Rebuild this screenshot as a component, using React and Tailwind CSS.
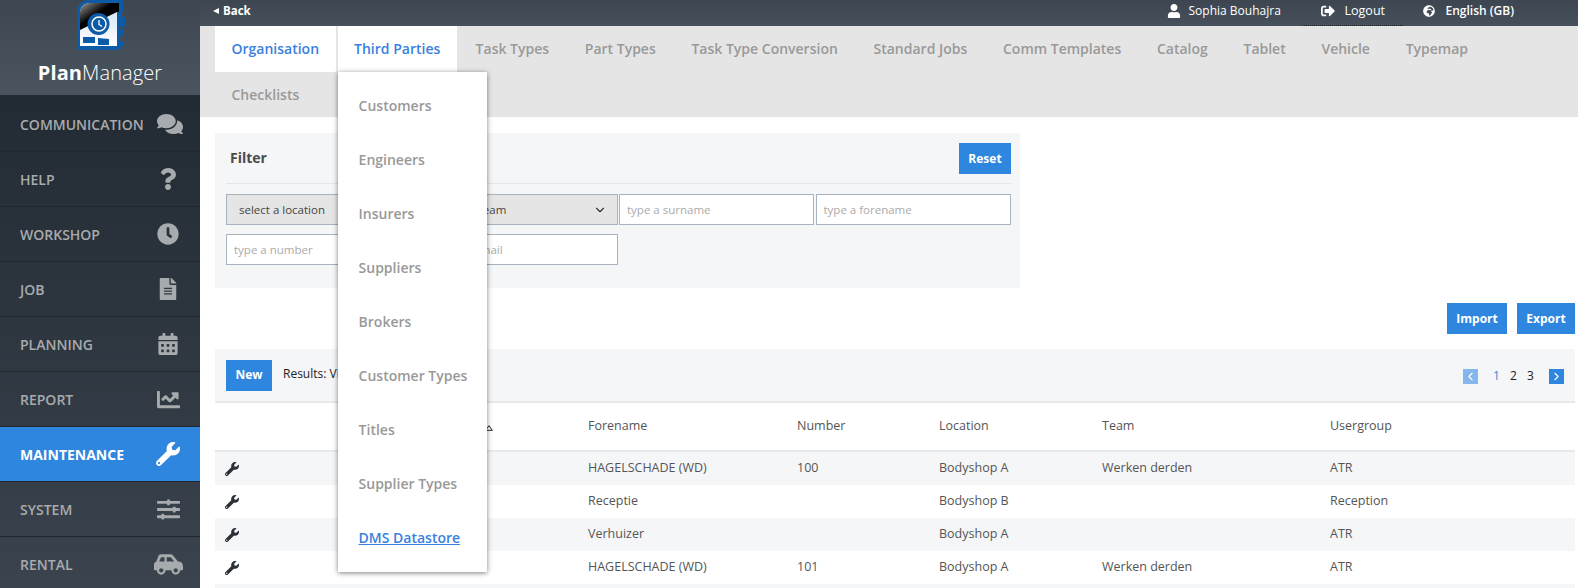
import React from "react";
import { ChevronDown, ChevronLeft, ChevronRight } from "lucide-react";
import {
  FaComments, FaQuestion, FaClock, FaFileAlt, FaCalendarAlt, FaChartLine, FaWrench,
  FaSlidersH, FaCarSide, FaUser, FaSignOutAlt, FaGlobeAfrica,
} from "react-icons/fa";

const nav = [
  ["COMMUNICATION", FaComments, 26, "mr-[4px]"],
  ["HELP", FaQuestion, 22, ""],
  ["WORKSHOP", FaClock, 22, ""],
  ["JOB", FaFileAlt, 22, ""],
  ["PLANNING", FaCalendarAlt, 22, ""],
  ["REPORT", FaChartLine, 23, ""],
  ["MAINTENANCE", FaWrench, 24, ""],
  ["SYSTEM", FaSlidersH, 23, ""],
  ["RENTAL", FaCarSide, 29, ""],
];
const tabs = ["Task Types", "Part Types", "Task Type Conversion", "Standard Jobs", "Comm Templates", "Catalog", "Tablet", "Vehicle", "Typemap"];
const menu = ["Customers", "Engineers", "Insurers", "Suppliers", "Brokers", "Customer Types", "Titles", "Supplier Types", "DMS Datastore"];
const rows = [
  ["HAGELSCHADE (WD)", "100", "Bodyshop A", "Werken derden", "ATR"],
  ["Receptie", "", "Bodyshop B", "", "Reception"],
  ["Verhuizer", "", "Bodyshop A", "", "ATR"],
  ["HAGELSCHADE (WD)", "101", "Bodyshop A", "Werken derden", "ATR"],
];
const cols = "grid grid-cols-[123px_240px_209px_142px_163px_228px_1fr]";

function Logo() {
  return (
    <svg width="50" height="50" viewBox="0 0 50 50" className="block">
      <defs>
        <linearGradient id="lg" x1="0" y1="0" x2="1" y2="1">
          <stop offset="0" stopColor="#9a9a9a" />
          <stop offset="0.42" stopColor="#000" />
          <stop offset="1" stopColor="#000" />
        </linearGradient>
        <linearGradient id="lw" x1="0" y1="0" x2="0" y2="1">
          <stop offset="0" stopColor="#cfe0f2" />
          <stop offset="1" stopColor="#fff" />
        </linearGradient>
      </defs>
      <path d="M47 0H14C6 0 1 5 1 13V50H44V47H48V41H44V36H48V29H44V27H49V17H46V12H47Z" fill="#0d5aa7" />
      <path d="M43 3H14C8 3 4 7 4 13V46H41V12H43Z" fill="url(#lw)" />
      <path d="M43 3H14C8 3 4 7 4 13V30L41 12H43Z" fill="url(#lg)" />
      <path d="M7 37H19V43H7Z" fill="#0d5aa7" />
      <path d="M22 38L33 39V45H22Z" fill="#0d5aa7" />
      <circle cx="22.5" cy="24" r="11" fill="#0d5aa7" />
      <circle cx="23" cy="24" r="7" fill="none" stroke="#fff" strokeWidth="1.5" />
      <path d="M23 20V24.5L26 26.5" fill="none" stroke="#fff" strokeWidth="1.3" />
    </svg>
  );
}

function Btn({ children, className = "" }) {
  return (
    <button className={`h-[31px] bg-[#2f86de] text-white text-[12px] font-bold flex items-center justify-center ${className}`}>
      {children}
    </button>
  );
}

export default function App() {
  return (
    <div className="flex w-[1578px] h-[588px] overflow-hidden bg-white text-[#444] font-['Open_Sans',sans-serif]">
      <aside className="w-[200px] shrink-0 flex flex-col">
        <div className="h-[95px] shrink-0 bg-linear-to-b from-[#3e4751] to-[#4a545f] flex flex-col items-center">
          <div className="ml-[2px]"><Logo /></div>
          <div className="mt-[9px] text-[20px] leading-[27px] text-white tracking-[0.1px]">
            <span className="font-bold">Plan</span><span className="font-light">Manager</span>
          </div>
        </div>
        <nav className="flex-1 min-h-0 pt-[2px] bg-linear-to-b from-[#222a33] to-[#3b444e]">
          {nav.map(([label, Icon, size, extra]) => {
            const active = label === "MAINTENANCE";
            return (
              <div key={label} className={`h-[55px] flex items-center justify-between pl-[20px] border-b border-[#20272f] ${active ? "bg-[#2f86de] text-white font-bold" : "text-[#a8abad] font-semibold"}`}>
                <span className="text-[14px]">{label}</span>
                <span className={`w-[64px] flex justify-center ${extra}`}><Icon size={size} /></span>
              </div>
            );
          })}
        </nav>
      </aside>

      <main className="flex-1 min-w-0 flex flex-col">
        <header className="h-[26px] shrink-0 bg-linear-to-b from-[#3d4650] to-[#47515b] text-white text-[12px] flex items-center">
          <span className="ml-[13px] mb-[5px] w-0 h-0 border-y-[3.5px] border-y-transparent border-r-[6px] border-r-white" />
          <span className="ml-[4px] mb-[5px] text-[11.5px] font-bold">Back</span>
          <div className="ml-auto h-full flex items-center">
            <FaUser size={14} className="mb-[5px]" />
            <span className="ml-[8px] w-[113px] mb-[5px]">Sophia Bouhajra</span>
            <div className="h-full pl-[19px] flex items-center border-b border-dotted border-[#222]">
              <FaSignOutAlt size={14} className="mb-[3px]" />
              <span className="ml-[10px] w-[58px] mb-[3px] text-[12.5px]">Logout</span>
            </div>
            <FaGlobeAfrica size={12} className="ml-[20px] mb-[5px]" />
            <span className="ml-[11px] mb-[5px] font-semibold mr-[64px]">English (GB)</span>
          </div>
        </header>

        <div className="h-[91px] shrink-0 bg-[#e5e5e5] pl-[15px] flex flex-wrap content-start text-[14px] font-semibold text-[#999] relative">
          <a className="h-[46px] flex items-center pb-[1px] px-[16.5px] bg-white text-[#3a7fe0]">Organisation</a>
          <div className="relative ml-[2px] mr-[1px]">
            <a className="h-[46px] flex items-center pb-[1px] px-[16.5px] bg-white text-[#3a7fe0]">Third Parties</a>
            <div className="absolute z-10 left-0 top-[46px] w-[149px] bg-white pt-[6px] pb-[8px] shadow-[0_1px_5px_rgba(0,0,0,0.5)]">
              {menu.map((m) => (
                <div key={m} className={`h-[54px] flex items-center pl-[21px] ${m === "DMS Datastore" ? "text-[#3a7fe0] underline" : "text-[#999]"}`}>{m}</div>
              ))}
            </div>
          </div>
          {tabs.map((t) => (
            <a key={t} className="h-[46px] flex items-center pb-[1px] px-[17.85px]">{t}</a>
          ))}
          <a className="h-[45px] flex items-center pl-[16.5px] pr-[18px]">Checklists</a>
        </div>

        <section className="ml-[15px] mt-[16px] w-[805px] h-[155px] shrink-0 bg-[#f5f6f8] pl-[11px] pt-[10px]">
          <div className="h-[41px] w-[785px] border-b border-[#e3e5e8] flex items-start justify-between">
            <span className="ml-[4px] mt-[6px] text-[14px] font-bold text-[#4a4a4a] leading-[18px]">Filter</span>
            <Btn className="w-[52px]">Reset</Btn>
          </div>
          <div className="mt-[10px] grid grid-cols-[195px_195px_195px_195px] gap-x-[1.5px] gap-y-[9px] text-[11.5px]">
            {["select a location", "select a team"].map((s) => (
              <div key={s} className="h-[31px] bg-[#e5e5e5] border border-[#a7b3c0] flex items-center justify-between pl-[12px] pr-[10px] text-[#444]">
                <span>{s}</span><ChevronDown size={14} strokeWidth={2} className="text-[#333]" />
              </div>
            ))}
            {["type a surname", "type a forename", "type a number", "type an email"].map((p) => (
              <input key={p} placeholder={p} className="h-[31px] w-full bg-white border border-[#a7b3c0] px-[7px] text-[11.5px] placeholder:text-[#aaa] outline-none" />
            ))}
          </div>
        </section>

        <div className="mt-[15px] mr-[3px] flex justify-end gap-[10px]">
          <Btn className="w-[60px]">Import</Btn>
          <Btn className="w-[58px]">Export</Btn>
        </div>

        <section className="mt-[15px] ml-[15px] mr-[3px] flex-1 bg-[#f5f6f8] text-[12.5px]">
          <div className="h-[54px] border-b-2 border-[#e8e9eb] flex items-start pl-[11px] pt-[11px]">
            <Btn className="w-[46px] pb-[1px]">New</Btn>
            <span className="ml-[11px] mt-[5px] text-[#222] text-[12px]">Results: Viewing</span>
            <div className="ml-auto mr-[11px] mt-[7px] flex items-center text-[#222] text-[12px]">
              <span className="w-[15px] h-[15px] bg-[#85b7ec] text-white flex items-center justify-center"><ChevronLeft size={13} /></span>
              <span className="ml-[15px] w-[17px] text-[#2f86de]">1</span>
              <span className="w-[17px]">2</span>
              <span className="w-[22px]">3</span>
              <span className="w-[15px] h-[15px] bg-[#2f86de] text-white flex items-center justify-center"><ChevronRight size={13} /></span>
            </div>
          </div>
          <div className={`${cols} h-[49px] bg-white border-b-2 border-[#e8e9eb] items-center text-[#555] [&>span]:pl-[10px]`}>
            <span />
            <span className="flex items-center">
              <span className="w-[137px]">Surname</span>
              <svg width="8" height="6" viewBox="0 0 8 6" className="mt-[2px]"><path d="M4 .7L7.3 5.3H.7Z" fill="#fff" stroke="#222" strokeWidth="1" /></svg>
            </span>
            <span>Forename</span><span>Number</span><span>Location</span><span>Team</span><span>Usergroup</span>
          </div>
          {rows.map((r, i) => (
            <div key={i} className={`${cols} h-[33px] items-center text-[#555] ${i % 2 ? "bg-white" : "bg-[#f5f6f8]"} [&>span]:pl-[10px]`}>
              <span className="text-[#2b3138]"><FaWrench size={14} /></span>
              <span />
              {r.map((c, j) => <span key={j}>{c}</span>)}
            </div>
          ))}
        </section>
      </main>
    </div>
  );
}
